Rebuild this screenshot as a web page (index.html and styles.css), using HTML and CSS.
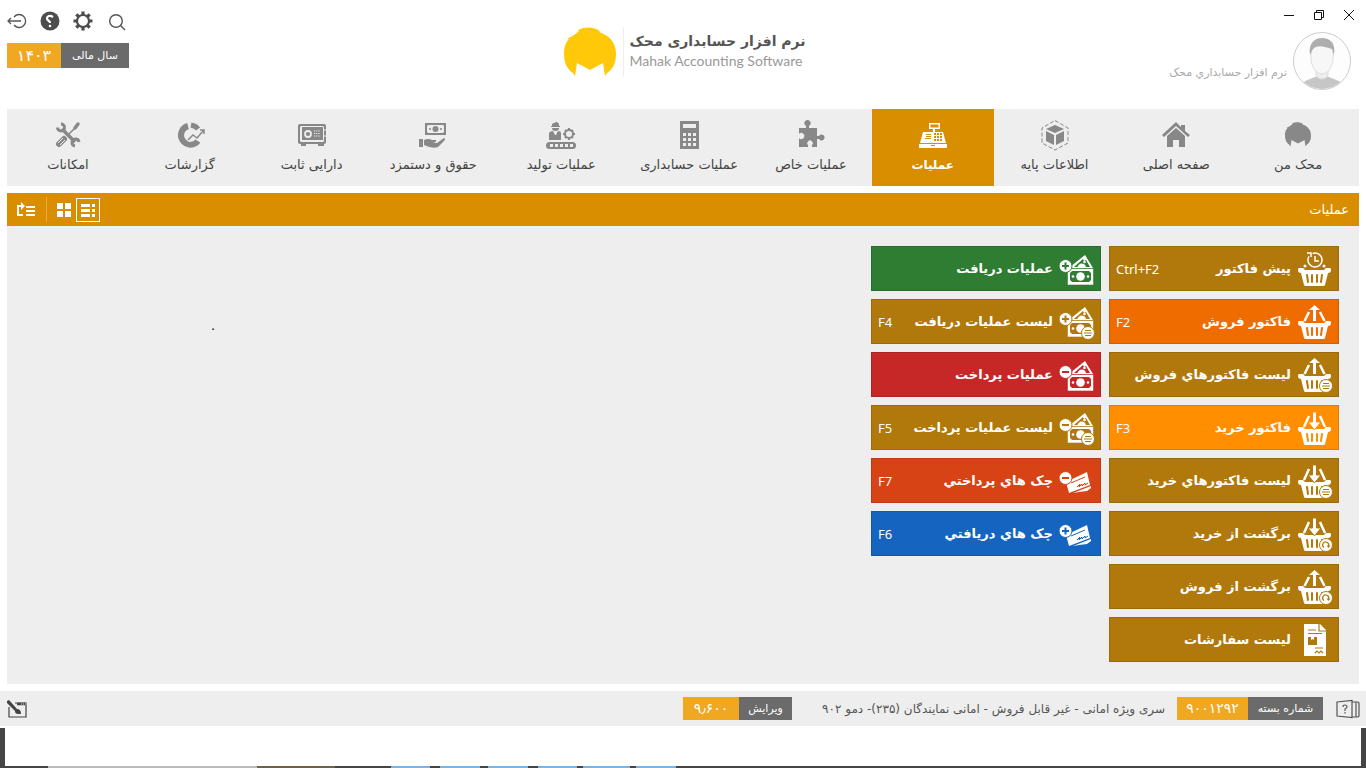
FILE: index.html
```html
<!DOCTYPE html>
<html lang="fa" dir="rtl">
<head>
<meta charset="utf-8">
<meta name="viewport" content="width=device-width, initial-scale=1">
<title>نرم افزار حسابداری محک</title>
<link rel="stylesheet" href="styles.css">
</head>
<body>
<svg class="sprite" aria-hidden="true">
  <defs>
    <symbol id="head" viewBox="0 0 52 50"><path d="M0 27C0 18 3 14 5 12L3 12C8 9 11 8 15 4L14 3C22 -1 30 0 36 4L35 5C47 9 52 17 52 27C52 37 48 43 43 46L41 49L39 36L26 43L13 36L11 49L9 46C3 42 0 36 0 27Z"/></symbol>
    <symbol id="basket" viewBox="0 0 36 36">
      <path fill="#fff" d="M2 17H6L8 19H27L29 17H33Q34 17 34 19Q34 22 31 22L28 34Q28 35 26 35H9Q7 35 7 34L4 22Q1 22 1 19Q1 17 2 17Z"/>
      <path stroke="var(--tile)" stroke-width="2" stroke-linecap="round" d="M10 24L11 31M15 24V31M20 24V31M25 24L24 31"/>
    </symbol>
    <symbol id="up" viewBox="0 0 36 36">
      <path fill="#fff" d="M17.500 1L23 6H19V17H16V6H12Z"/><path stroke="#fff" stroke-width="2.500" d="M12 8L7.500 17M23 8L27.500 17"/>
    </symbol>
    <symbol id="down" viewBox="0 0 36 36">
      <path stroke="#fff" stroke-width="2.500" d="M12 6L7 17M23 6L28 17"/><path fill="#fff" stroke="var(--tile)" stroke-width="1" d="M15.500 2H19.500V12H24L17.500 20L11 12H15.500Z"/>
    </symbol>
    <symbol id="lines" viewBox="0 0 36 36"><circle cx="29" cy="29" r="6.500" fill="#fff" stroke="var(--tile)"/><path stroke="var(--tile)" stroke-width="1.200" d="M26 26.500H32M25 29H33M26 31.500H32"/></symbol>
    <symbol id="again" viewBox="0 0 36 36"><circle cx="29" cy="29" r="6.500" fill="#fff" stroke="var(--tile)"/><path fill="none" stroke="var(--tile)" stroke-width="1.200" d="M27 31.500A3 3 0 1 1 31.500 30"/><path fill="var(--tile)" d="M29.500 29.500H33.500L31.500 32Z"/></symbol>
    <symbol id="money" viewBox="0 0 36 36">
      <path fill="#fff" d="M11 16L26 4L34 17H11Z"/>
      <path fill="var(--tile)" d="M15 16L24 8L25 10L27 9L31 16Z"/><path fill="#fff" d="M18 17Q20 11 25 13Q27 14 27 17Z"/><circle cx="25.500" cy="11" r="1.300" fill="#fff"/>
      <path fill="#fff" stroke="var(--tile)" stroke-width=".6" d="M8.500 17.500H34.500V34H8.500Z"/>
      <path fill="var(--tile)" d="M13 20H30L32 22V29L30 31H13L11 29V22Z"/><circle cx="21.500" cy="25.500" r="4.300" fill="#fff"/><circle cx="14" cy="25.500" r="1.300" fill="#fff"/><circle cx="29" cy="25.500" r="1.300" fill="#fff"/>
    </symbol>
    <symbol id="cheque" viewBox="0 0 36 36">
      <path fill="#fff" d="M7 19L28 9L31 22L10 30Z"/><path fill="#fff" d="M14 30L32 23L32 25L28 28L20 29Z"/><path stroke="var(--tile)" d="M12 20L26 14"/><path fill="none" stroke="var(--tile)" stroke-width="1" d="M18 24L21 21L20 24L23 21L23 23L26 20L26 22L29 20"/>
    </symbol>
    <symbol id="plus" viewBox="0 0 36 36"><circle cx="6.500" cy="15" r="6.500" fill="#fff" stroke="var(--tile)"/><path stroke="var(--tile)" stroke-width="2" d="M3 15H10M6.500 11.500V18.500"/></symbol>
    <symbol id="minus" viewBox="0 0 36 36"><circle cx="6.500" cy="15" r="6.500" fill="#fff" stroke="var(--tile)"/><path stroke="var(--tile)" stroke-width="2" d="M3 15H10"/></symbol>
  </defs>
</svg>

<header class="top">
  <div class="account">
    <div class="window-buttons">
      <button aria-label="بستن"><svg width="12" height="12" viewBox="0 0 12 12"><path d="M1 1L11 11M11 1L1 11"/></svg></button>
      <button aria-label="بازگردانی"><svg width="12" height="12" viewBox="0 0 12 12"><path d="M1.500 3.500H8.500V10.500H1.500ZM3.500 3.500V1.500H10.500V8.500H8.500"/></svg></button>
      <button aria-label="کوچک کردن"><svg width="12" height="12" viewBox="0 0 12 12"><path d="M1 6.500H11"/></svg></button>
    </div>
    <div class="user">
      <svg width="58" height="58" viewBox="0 0 58 58">
        <defs><clipPath id="round"><circle cx="29" cy="29" r="28"/></clipPath></defs>
        <circle cx="29" cy="29" r="28" fill="#fdfdfd"/>
        <g clip-path="url(#round)"><path fill="#c6c6c6" d="M5 58C8 49 15 48 22 45L36 45C43 48 50 49 53 58Z"/><path fill="#eee" stroke="#ddd" d="M23 36H35V44Q29 50 23 44Z"/><path fill="#f7f7f7" stroke="#ddd" d="M18 17Q29 7 40 17V28C39 36 34 42 29 42S19 36 18 28Z"/><path fill="#aeaeae" d="M17 23C15 12 21 6 29 6S43 11 41 23L39 17C32 15 25 12 20 17Z"/></g>
        <circle cx="29" cy="29" r="28.500" fill="none" stroke="#ccc"/>
      </svg>
      <span>نرم افزار حسابداري محک</span>
    </div>
  </div>
  <div class="brand" dir="ltr">
    <svg class="brand-mark" width="52" height="50"><use href="#head"/></svg>
    <div class="brand-text"><strong dir="rtl">نرم افزار حسابداری محک</strong><span>Mahak Accounting Software</span></div>
  </div>
  <div class="tools" dir="ltr">
    <div class="tool-row">
      <button aria-label="خروج"><svg width="20" height="20" viewBox="0 0 20 20" fill="none" stroke="#555" stroke-width="1.300"><path d="M7 6A6.500 6.500 0 1 1 7 14M14 10H1M4 7L1 10L4 13"/></svg></button>
      <button aria-label="راهنما"><svg width="20" height="20" viewBox="0 0 20 20"><circle cx="10" cy="10" r="9.500" fill="#4c4c4c"/><path fill="none" stroke="#fff" stroke-width="2.200" d="M13 6C10 4 7 5 7 7.500S10 9 10 12"/><circle cx="10" cy="15" r="1.300" fill="#fff"/></svg></button>
      <button aria-label="تنظیمات"><svg width="20" height="20" viewBox="0 0 20 20" fill="none" stroke="#4c4c4c"><circle cx="10" cy="10" r="6" stroke-width="2.200"/><g stroke-width="3.200"><path d="M10 .5V4M10 16V19.500M.5 10H4M16 10H19.500M3.300 3.300L5.700 5.700M14.300 14.300L16.700 16.700M3.300 16.700L5.700 14.300M14.300 5.700L16.700 3.300"/></g></svg></button>
      <button aria-label="جستجو"><svg width="20" height="20" viewBox="0 0 20 20" fill="none" stroke="#555" stroke-width="1.400"><circle cx="10" cy="10" r="6.300"/><path d="M14.500 14.500L19 19"/></svg></button>
    </div>
    <div class="badge year"><b>۱۴۰۳</b><span>سال مالی</span></div>
  </div>
</header>

<nav class="menu">
  <a href="#"><svg width="32" height="32" viewBox="0 0 32 32"><use href="#head" x="3" y="3" width="26" height="25"/></svg>محک من</a>
  <a href="#"><svg width="32" height="32" viewBox="0 0 32 32"><path d="M2 16L16 3L21 8V6H25V12L30 16L28 18L16 7L4 18Z"/><path d="M7 17L16 9L25 17V28H19V21H13V28H7Z"/></svg>صفحه اصلی</a>
  <a href="#"><svg width="32" height="32" viewBox="0 0 32 32"><path fill="none" stroke="currentColor" stroke-dasharray="4 2" d="M16 1.500L29 9V24L16 31L3 24V9Z"/><path d="M16 6L25 10L16 14L7 10ZM7 12L15 16V26L7 22ZM25 12V22L17 26V16Z"/></svg>اطلاعات پایه</a>
  <a href="#" class="current" aria-current="page"><svg width="32" height="32" viewBox="0 0 32 32"><path fill-rule="evenodd" d="M12 4H23V10H18V13H26L29 24H3L6 13H16V10H12ZM13.500 5.500V8.500H21.500V5.500ZM9 15V16H14V15ZM9 17V18H14V17ZM8 19V20H14V19ZM17 14V16H19V14ZM20 14V16H22V14ZM23 14V16H25V14ZM17 17V19H19V17ZM20 17V19H22V17ZM23 17V19H25V17ZM17 20V22H19V20ZM20 20V22H22V20ZM23 20V22H25V20ZM2 25H30V29H2ZM14 26V27H18V26Z"/></svg>عملیات</a>
  <a href="#"><svg width="32" height="32" viewBox="0 0 32 32"><path d="M4 9H11V7A3.200 3.200 0 1 1 14 7V9H22V17H24A3 3 0 1 1 24 20H22V28H17V26A2.700 2.700 0 1 0 13 26V28H4V19A3 3 0 1 0 4 15Z"/></svg>عملیات خاص</a>
  <a href="#"><svg width="32" height="32" viewBox="0 0 32 32"><path fill-rule="evenodd" d="M7 2H26V30H7ZM10 5V9H23V5ZM10 14V17H13V14ZM15 14V17H18V14ZM20 14V17H23V14ZM10 19V22H13V19ZM15 19V22H18V19ZM20 19V22H23V19ZM10 24V27H13V24ZM15 24V27H18V24ZM20 24V27H23V24Z"/></svg>عملیات حسابداری</a>
  <a href="#" class="wide"><svg width="32" height="32" viewBox="0 0 32 32"><path d="M9 4L11 3H12L14 5V7H15V8H6V7H7V5ZM7 9H14Q14 12 10.500 12T7 9ZM4 21V14Q5 12 8 12L10 16H11L13 12Q16 12 16 14V21Z"/><circle cx="24" cy="15" r="4" fill="none" stroke="currentColor" stroke-width="2"/><path fill="none" stroke="currentColor" stroke-width="2" d="M24 9V11M24 19V21M18 15H20M28 15H30M20 11L21 12M27 18L28 19M20 19L21 18M27 12L28 11"/><rect x="1" y="23" width="30" height="7" rx="3.500"/><path stroke="#eee" stroke-width="3" stroke-dasharray="3 2" d="M5 26.500H28"/></svg>عملیات تولید</a>
  <a href="#"><svg width="32" height="32" viewBox="0 0 32 32"><path fill-rule="evenodd" d="M8 4H29V16H8ZM11 6L10 7V13L11 14H26L27 13V7L26 6Z"/><circle cx="18.500" cy="10" r="3"/><circle cx="13" cy="10" r="1"/><circle cx="24" cy="10" r="1"/><path d="M2 20H6V28H2ZM7 21Q12 19 15 21H19Q20 23 16 24L20 24L27 19Q29 20 27 22L21 28Q15 30 7 26Z"/></svg>حقوق و دستمزد</a>
  <a href="#"><svg width="32" height="32" viewBox="0 0 32 32"><path fill-rule="evenodd" d="M4 5H28Q30 5 30 7V23Q30 25 28 25V27H22V25H10V27H5V25Q2 25 2 23V7Q2 5 4 5ZM5 7L4 8V22L5 23H27L28 22V8L27 7Z"/><rect x="6" y="8" width="21" height="13"/><circle cx="12" cy="15" r="3" fill="none" stroke="#eee" stroke-width="1.800"/><path stroke="#eee" stroke-width="1.200" stroke-dasharray="1.200 1" d="M18 12H24M18 14.500H24M18 17H24"/><path stroke="#eee" d="M28 11H31M28 17H31"/></svg>دارایی ثابت</a>
  <a href="#"><svg width="32" height="32" viewBox="0 0 32 32"><path fill="none" stroke="currentColor" stroke-width="6" d="M14 7A9.500 9.500 0 1 0 24 22"/><path fill="none" stroke="currentColor" stroke-width="5" d="M17 6Q22 7 24 10"/><path fill="none" stroke="#eee" stroke-width="4" d="M14 22L19 16L23 19L29 11"/><path fill="none" stroke="currentColor" stroke-width="1.500" d="M14 21L19 16L23 19L30 11M26 11H30V15"/></svg>گزارشات</a>
  <a href="#"><svg width="32" height="32" viewBox="0 0 32 32"><path stroke="currentColor" stroke-width="3.500" d="M10 10L23 23"/><path fill="none" stroke="currentColor" stroke-width="3" d="M9 5A3.500 3.500 0 1 1 5.500 8.500M23 27A3.500 3.500 0 1 1 27 23"/><path stroke="currentColor" stroke-width="3.500" stroke-linecap="round" d="M23 9L26 5"/><path stroke="currentColor" stroke-width="1.600" d="M17 15L23 9"/><path stroke="currentColor" stroke-width="6" stroke-linecap="round" d="M7 25L12 20"/><path stroke="#eee" stroke-width="1" d="M6 24L11 19M8 26L13 21"/></svg>امکانات</a>
</nav>

<main class="workspace">
  <div class="bar">
    <h1>عملیات</h1>
    <div class="views" dir="ltr">
      <button aria-label="چیدمان"><svg width="20" height="16" viewBox="0 0 20 16" fill="none" stroke="#fff" stroke-width="2"><path d="M7 13H2V4H6M10 5H19M10 9H19M10 13H19"/><path fill="#fff" stroke="none" d="M5 0L9 4L5 8Z"/></svg></button>
      <i class="rule"></i>
      <button aria-label="نمای کاشی"><svg width="14" height="14" viewBox="0 0 14 14" fill="#fff"><path d="M0 0H6V6H0ZM8 0H14V6H8ZM0 8H6V14H0ZM8 8H14V14H8Z"/></svg></button>
      <button class="selected" aria-label="نمای فهرست"><svg width="14" height="14" viewBox="0 0 14 14" fill="#fff"><path d="M0 1H9V4H0ZM0 6H9V9H0ZM0 11H9V14H0ZM11 1H14V4H11ZM11 6H14V9H11ZM11 11H14V14H11Z"/></svg></button>
    </div>
  </div>
  <div class="panel">
    <div class="column">
      <button class="tile"><svg><use href="#basket"/><circle cx="18" cy="9" r="7" fill="none" stroke="#fff" stroke-width="1.500" stroke-dasharray="39 5" transform="rotate(-110 18 9)"/><path fill="none" stroke="#fff" stroke-width="1.500" d="M18 5V10H22M10 2H14V6"/><circle cx="8" cy="15" r="1.500" fill="#fff"/><circle cx="27" cy="15" r="1.500" fill="#fff"/></svg><b>پیش فاکتور</b><kbd>Ctrl+F2</kbd></button>
      <button class="tile sale"><svg><use href="#basket"/><use href="#up"/></svg><b>فاکتور فروش</b><kbd>F2</kbd></button>
      <button class="tile"><svg><use href="#basket"/><use href="#up"/><use href="#lines"/></svg><b>لیست فاکتورهاي فروش</b></button>
      <button class="tile buy"><svg><use href="#basket"/><use href="#down"/></svg><b>فاکتور خرید</b><kbd>F3</kbd></button>
      <button class="tile"><svg><use href="#basket"/><use href="#down"/><use href="#lines"/></svg><b>لیست فاکتورهاي خرید</b></button>
      <button class="tile"><svg><use href="#basket"/><use href="#down"/><use href="#again"/></svg><b>برگشت از خرید</b></button>
      <button class="tile"><svg><use href="#basket"/><use href="#up"/><use href="#again"/></svg><b>برگشت از فروش</b></button>
      <button class="tile"><svg><path fill="#fff" d="M7 2H23L29 8V34H7Z"/><path fill="none" stroke="var(--tile)" stroke-width="1.200" d="M22 2V9H29M11 8H19M11 11.500H25M18 26H26M18 31L20 29L22 31L24 29L26 31"/><path fill="var(--tile)" d="M11 15H20V23H11Z"/><path fill="#fff" d="M14 15H17V18L15.500 17L14 18Z"/></svg><b>لیست سفارشات</b></button>
    </div>
    <div class="column">
      <button class="tile receive"><svg><use href="#money"/><use href="#plus"/></svg><b>عملیات دریافت</b></button>
      <button class="tile"><svg><use href="#money" y="-1"/><use href="#plus"/><use href="#lines"/></svg><b>لیست عملیات دریافت</b><kbd>F4</kbd></button>
      <button class="tile pay"><svg><use href="#money"/><use href="#minus"/></svg><b>عملیات پرداخت</b></button>
      <button class="tile"><svg><use href="#money" y="-1"/><use href="#minus"/><use href="#lines"/></svg><b>لیست عملیات پرداخت</b><kbd>F5</kbd></button>
      <button class="tile cheque-out"><svg><use href="#cheque"/><use href="#minus"/></svg><b>چک هاي پرداختي</b><kbd>F7</kbd></button>
      <button class="tile cheque-in"><svg><use href="#cheque"/><use href="#plus"/></svg><b>چک هاي دریافتي</b><kbd>F6</kbd></button>
    </div>
    <div class="blank" dir="ltr">.</div>
  </div>
</main>

<footer class="status">
  <svg width="24" height="20" viewBox="0 0 24 20" fill="none" stroke="#555" stroke-width="1.200"><path d="M1 3L16 1.500V18.500L1 17ZM16 3H22L23 4V17L22 18H16M20 3V18"/><path d="M7 8Q7 6 9 6T11 8Q11 9 9 10V12M9 13V14.500"/></svg>
  <div class="badge package"><b>۹۰۰۱۲۹۲</b><span>شماره بسته</span></div>
  <p>سری ویژه امانی - غیر قابل فروش - امانی نمایندگان (۲۳۵)- دمو ۹۰۲</p>
  <div class="badge version"><b>۹٫۶۰۰</b><span>ویرایش</span></div>
  <button class="theme" aria-label="پوسته"><svg width="22" height="20" viewBox="0 0 22 20"><path fill="none" stroke="#444" stroke-width="1.200" d="M9 4H20V18H3V8"/><path stroke="#444" stroke-width="2.500" d="M11 5H20"/><path stroke="#eee" stroke-dasharray="1 1" d="M15 5H20"/><path fill="#444" d="M1 2L3 1L11 10Q15 10 15 15H12Q9 15 9 12L1 4Z"/></svg></button>
</footer>
<div class="backdrop"><div class="taskbar"></div></div>
</body>
</html>
```
FILE: styles.css
```css
* { box-sizing: border-box; }
body {
  margin: 0;
  min-height: 100vh;
  display: flex;
  flex-direction: column;
  background: #fff;
  color: #444;
  font: 13px/18px "DejaVu Sans", sans-serif;
}
button {
  padding: 0;
  border: 0;
  background: none;
  color: inherit;
  font: inherit;
  display: flex;
  align-items: center;
}
svg { display: block; flex: none; }
.sprite { position: absolute; width: 0; height: 0; }

.top {
  display: grid;
  grid-template-columns: 1fr auto 1fr;
  min-height: 109px;
}
.window-buttons {
  display: flex;
  gap: 18px;
  padding: 9px 11px 0;
}
.window-buttons svg { fill: none; stroke: #111; }
.user {
  display: flex;
  align-items: center;
  gap: 6px;
  padding: 11px 15px 0;
  color: #aaa;
  font-size: 11px;
}
.user span { padding-top: 24px; }
.brand {
  display: flex;
  align-items: center;
  align-self: start;
  gap: 7px;
  margin: 27px 0 0 4px;
}
.brand-mark { fill: #ffc90a; }
.brand-text {
  display: flex;
  flex-direction: column;
  border-left: 1px solid #eee;
  padding: 5px 0 7px 5px;
  color: #999;
  font: 14px/19px "Lato", sans-serif;
}
.brand-text strong { color: #555; font: bold 14px/19px "DejaVu Sans", sans-serif; }
.tools {
  display: flex;
  flex-direction: column;
  align-items: flex-start;
  gap: 12px;
  padding: 11px 7px;
}
.tool-row { display: flex; gap: 13px; }
.badge { display: flex; direction: ltr; color: #fff; line-height: 25px; font-size: 11px; text-align: center; }
.badge b { width: 54px; background: #f0a722; font-size: 14px; font-weight: normal; direction: rtl; }
.badge span { width: 68px; background: #6b6b6b; direction: rtl; }
.year b { font-size: 16px; }

.menu { display: flex; margin: 0 7px; background: #eee; }
.menu a {
  flex: 100 1 0;
  display: flex;
  flex-direction: column;
  align-items: center;
  gap: 5px;
  padding: 10px 0 12px;
  color: #444;
  text-decoration: none;
  white-space: nowrap;
}
.menu .wide { flex-grow: 110; }
.menu svg { color: #888; fill: #888; }
.menu .current { background: #d98e00; color: #fff; font-size: 12px; font-weight: bold; }
.menu .current svg { color: #fff; fill: #fff; }

.workspace { flex: 1; display: flex; flex-direction: column; margin: 7px; }
.bar {
  display: flex;
  justify-content: space-between;
  align-items: center;
  min-height: 33px;
  padding: 0 10px 0 9px;
  background: #d98e00;
  color: #fff;
}
.bar h1 { margin: 0; font: inherit; }
.views { display: flex; align-items: center; }
.views .rule { width: 1px; height: 25px; margin: 0 10px; background: #e8ab3c; }
.views .selected { margin-left: 5px; padding: 4px; border: 1px solid #fff; }
.panel { flex: 1; display: flex; gap: 8px; padding: 20px 20px 22px; background: #eee; }
.column { flex: 0 1 230px; display: flex; flex-direction: column; gap: 8px; }
.tile {
  --tile: #b1790c;
  min-height: 45px;
  gap: 6px;
  padding: 0 5px 0 6px;
  border: 1px solid rgb(0 0 0 / 12%);
  background: var(--tile);
  color: #fff;
}
.tile svg { width: 36px; height: 36px; }
.tile b { font-size: 13px; white-space: nowrap; }
.tile kbd { margin-right: auto; font: 13px/18px "Noto Sans", sans-serif; direction: ltr; }
.sale { --tile: #ef6c00; }
.buy { --tile: #ff8f00; }
.receive { --tile: #2e7d32; }
.pay { --tile: #c62828; }
.cheque-out { --tile: #d84315; }
.cheque-in { --tile: #1565c0; }
.blank { flex: 1; padding: 71px 0 0 184px; color: #000; }

.status {
  display: flex;
  align-items: center;
  min-height: 35px;
  padding: 0 6px;
  background: #eee;
}
.status p { margin: 0 12px; color: #555; font-size: 12px; white-space: nowrap; }
.status .badge { height: 23px; line-height: 23px; }
.package { margin-right: 13px; }
.package b { width: 71px; }
.package span { width: 75px; }
.version { margin-right: 18px; }
.version b { width: 56px; }
.version span { width: 53px; }
.theme { margin-right: auto; }
.backdrop {
  display: flex;
  flex-direction: column;
  justify-content: flex-end;
  height: 40px;
  margin-top: 2px;
  border: solid #454545;
  border-width: 0 5px;
}
.taskbar {
  height: 2px;
  background: linear-gradient(to right,
    #454545 43px, #bbb 43px 252px, #70624a 252px 330px, #454545 330px 386px,
    #79b4e2 386px 425px, #454545 425px 435px, #79b4e2 435px 475px, #454545 475px 483px,
    #79b4e2 483px 523px, #454545 523px 533px, #79b4e2 533px 572px, #454545 572px 578px,
    #79b4e2 578px 625px, #454545 625px 631px, #79b4e2 631px 671px, #454545 671px);
}
```
